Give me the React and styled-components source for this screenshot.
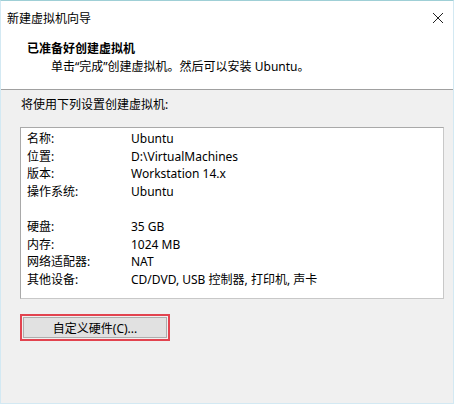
import React from "react"
import styled, { createGlobalStyle } from "styled-components"

const GlobalStyle = createGlobalStyle`
  html, body { margin: 0; padding: 0; background: #fff; }
  body { font-family: "Noto Sans", "Noto Sans CJK SC", sans-serif; font-size: 12px; color: #000; }
`

const Window = styled.div`
  width: 454px;
  height: 404px;
  box-sizing: border-box;
  border: 1px solid #d3e9f3;
  border-top-color: #9fcfd6;
  display: flex;
  flex-direction: column;
  background: #f0f0f0;
  overflow: hidden;
`

const TitleBar = styled.div`
  height: 33px;
  display: flex;
  align-items: center;
  justify-content: space-between;
  padding: 0 9px 0 6px;
  background: #fff;
`

const Title = styled.span`
  font-size: 12px;
`

const Header = styled.div`
  height: 56px;
  background: #fff;
  border-bottom: 1px solid #a0a0a0;
  padding: 6px 0 0 26px;
  box-sizing: border-box;
`

const HeaderTitle = styled.div`
  font-weight: bold;
  font-size: 12px;
  line-height: 18px;
`

const HeaderSub = styled.div`
  padding-left: 24px;
  line-height: 17px;
`

const Body = styled.div`
  padding: 6px 10px 0 19px;
  display: flex;
  flex-direction: column;
`

const Intro = styled.div`
  line-height: 18px;
  padding-left: 1px;
`

const Summary = styled.div`
  margin-top: 13px;
  width: 424px;
  height: 172px;
  box-sizing: border-box;
  background: #fff;
  border: 1px solid #a9a9a9;
  border-right-color: #c8c8c8;
  border-bottom-color: #c8c8c8;
  padding: 2px 0 0 6px;
`

const Row = styled.div`
  display: grid;
  grid-template-columns: 104px 1fr;
  height: 17.5px;
  line-height: 17.5px;
  white-space: nowrap;
`

const Gap = styled.div`
  height: 18px;
`

const ButtonWrap = styled.div`
  margin-top: 15px;
  width: 150px;
  height: 27px;
  box-sizing: border-box;
  border: 2px solid #e2434f;
  padding: 1px;
  display: flex;
`

const Button = styled.button`
  flex: 1;
  border: 1px solid #adadad;
  background: #e1e1e1;
  font: inherit;
  font-size: 12px;
  padding: 0;
  color: #000;
`

const rows = [
  ["名称:", "Ubuntu"],
  ["位置:", "D:\\VirtualMachines"],
  ["版本:", "Workstation 14.x"],
  ["操作系统:", "Ubuntu"],
  null,
  ["硬盘:", "35 GB"],
  ["内存:", "1024 MB"],
  ["网络适配器:", "NAT"],
  ["其他设备:", "CD/DVD, USB 控制器, 打印机, 声卡"],
]

export default function App() {
  return (
    <>
      <GlobalStyle />
      <Window>
        <TitleBar>
          <Title>新建虚拟机向导</Title>
          <svg width="12" height="12" viewBox="0 0 12 12">
            <path d="M1 1 L11 11 M11 1 L1 11" stroke="#222" strokeWidth="1" fill="none" />
          </svg>
        </TitleBar>
        <Header>
          <HeaderTitle>已准备好创建虚拟机</HeaderTitle>
          <HeaderSub>单击“完成”创建虚拟机。然后可以安装 Ubuntu。</HeaderSub>
        </Header>
        <Body>
          <Intro>将使用下列设置创建虚拟机:</Intro>
          <Summary>
            {rows.map((r, i) =>
              r ? (
                <Row key={i}>
                  <span>{r[0]}</span>
                  <span>{r[1]}</span>
                </Row>
              ) : (
                <Gap key={i} />
              )
            )}
          </Summary>
          <ButtonWrap>
            <Button>自定义硬件(C)...</Button>
          </ButtonWrap>
        </Body>
      </Window>
    </>
  )
}
